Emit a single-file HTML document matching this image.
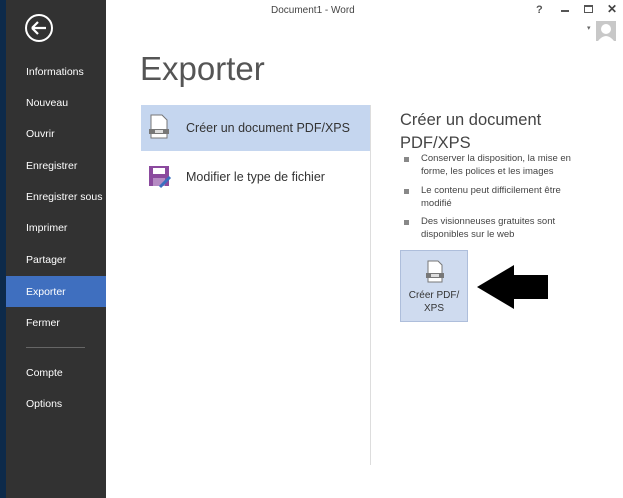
<!DOCTYPE html>
<html><head><meta charset="utf-8"><style>
*{margin:0;padding:0;box-sizing:border-box}
body{width:623px;height:498px;background:#fff;font-family:"Liberation Sans",sans-serif;position:relative;overflow:hidden}
.strip{position:absolute;left:0;top:0;width:6px;height:498px;background:#0d2a4a}
.side{position:absolute;left:6px;top:0;width:100px;height:498px;background:#323232}
.side div{position:absolute;left:20px;color:#fff;font-size:10.5px}
.exp{position:absolute;left:6px;top:276px;width:100px;height:31px;background:#3f6fbf}
.t{position:absolute;white-space:nowrap}
.li{position:absolute;left:421px;font-size:9.5px;color:#444;line-height:12.5px}
.sq{position:absolute;left:404px;width:5px;height:5px;background:#888}
</style></head><body>
<div class="strip"></div>
<div class="side">
<svg style="position:absolute;left:18px;top:13px" width="30" height="30"><circle cx="15" cy="15" r="13" fill="none" stroke="#fff" stroke-width="2"/><path d="M8 15H22M8 15L14 9M8 15L14 21" stroke="#fff" stroke-width="2.2" fill="none"/></svg>
</div>
<div class="exp"></div>
<div class="side" style="background:none">
<div style="top:66px">Informations</div>
<div style="top:97px">Nouveau</div>
<div style="top:128px">Ouvrir</div>
<div style="top:160px">Enregistrer</div>
<div style="top:191px">Enregistrer sous</div>
<div style="top:222px">Imprimer</div>
<div style="top:254px">Partager</div>
<div style="top:286px;color:#fff">Exporter</div>
<div style="top:317px">Fermer</div>
<div style="top:347px;width:59px;height:1px;background:#666"></div>
<div style="top:367px">Compte</div>
<div style="top:398px">Options</div>
</div>
<div class="t" style="left:271px;top:5px;font-size:10px;color:#444">Document1 - Word</div>
<div class="t" style="left:536px;top:4px;font-size:11px;color:#555;font-weight:bold">?</div>
<div style="position:absolute;left:561px;top:10px;width:8px;height:1.5px;background:#555"></div>
<div style="position:absolute;left:584px;top:5px;width:9px;height:8px;border:1.5px solid #555;border-top-width:2.5px"></div>
<div class="t" style="left:607px;top:2px;font-size:12px;color:#444;font-weight:bold">✕</div>
<div class="t" style="left:587px;top:24px;font-size:7px;color:#666">▾</div>
<svg style="position:absolute;left:596px;top:21px" width="20" height="20"><rect width="20" height="20" fill="#c8c8c8"/><circle cx="10" cy="8" r="5" fill="#fff"/><path d="M2 20Q10 10 18 20Z" fill="#fff"/></svg>
<div class="t" style="left:140px;top:50px;font-size:33px;color:#555;font-weight:300">Exporter</div>
<div style="position:absolute;left:141px;top:105px;width:229px;height:46px;background:#c5d6ef"></div>
<svg style="position:absolute;left:148px;top:114px" width="22" height="26"><path d="M3 1H14L19 6V24H3Z" fill="#fff" stroke="#777"/><rect x="1" y="15" width="20" height="5" fill="#777"/><rect x="7" y="16" width="8" height="3" fill="#ddd"/></svg>
<div class="t" style="left:186px;top:121px;font-size:12.5px;color:#333">Créer un document PDF/XPS</div>
<svg style="position:absolute;left:148px;top:165px" width="26" height="26"><rect x="1" y="1" width="20" height="20" fill="#8b4a9e"/><rect x="5" y="3" width="12" height="6" fill="#fff"/><rect x="5" y="13" width="12" height="8" fill="#b58bc3"/><path d="M12 22L22 12" stroke="#3a6fc0" stroke-width="3"/></svg>
<div class="t" style="left:186px;top:170px;font-size:12.5px;color:#333">Modifier le type de fichier</div>
<div style="position:absolute;left:370px;top:105px;width:1px;height:360px;background:#ddd"></div>
<div class="t" style="left:400px;top:109px;font-size:16.5px;color:#444;line-height:23px">Créer un document<br>PDF/XPS</div>
<div class="sq" style="top:157px"></div><div class="li" style="top:153px">Conserver la disposition, la mise en<br>forme, les polices et les images</div>
<div class="sq" style="top:189px"></div><div class="li" style="top:185px">Le contenu peut difficilement être<br>modifié</div>
<div class="sq" style="top:220px"></div><div class="li" style="top:216px">Des visionneuses gratuites sont<br>disponibles sur le web</div>
<div style="position:absolute;left:400px;top:250px;width:68px;height:72px;background:#cfdbef;border:1px solid #aebedb"></div>
<svg style="position:absolute;left:425px;top:260px" width="20" height="24"><path d="M3 1H13L17 5V22H3Z" fill="#fff" stroke="#777"/><rect x="1" y="13" width="18" height="5" fill="#777"/><rect x="6" y="14" width="8" height="3" fill="#ddd"/></svg>
<div class="t" style="left:400px;top:289px;width:68px;text-align:center;font-size:10px;color:#333;line-height:13px">Créer PDF/<br>XPS</div>
<svg style="position:absolute;left:476px;top:264px" width="74" height="46"><path d="M1 23L38 1V11H72V35H38V45Z" fill="#000"/></svg>
</body></html>
